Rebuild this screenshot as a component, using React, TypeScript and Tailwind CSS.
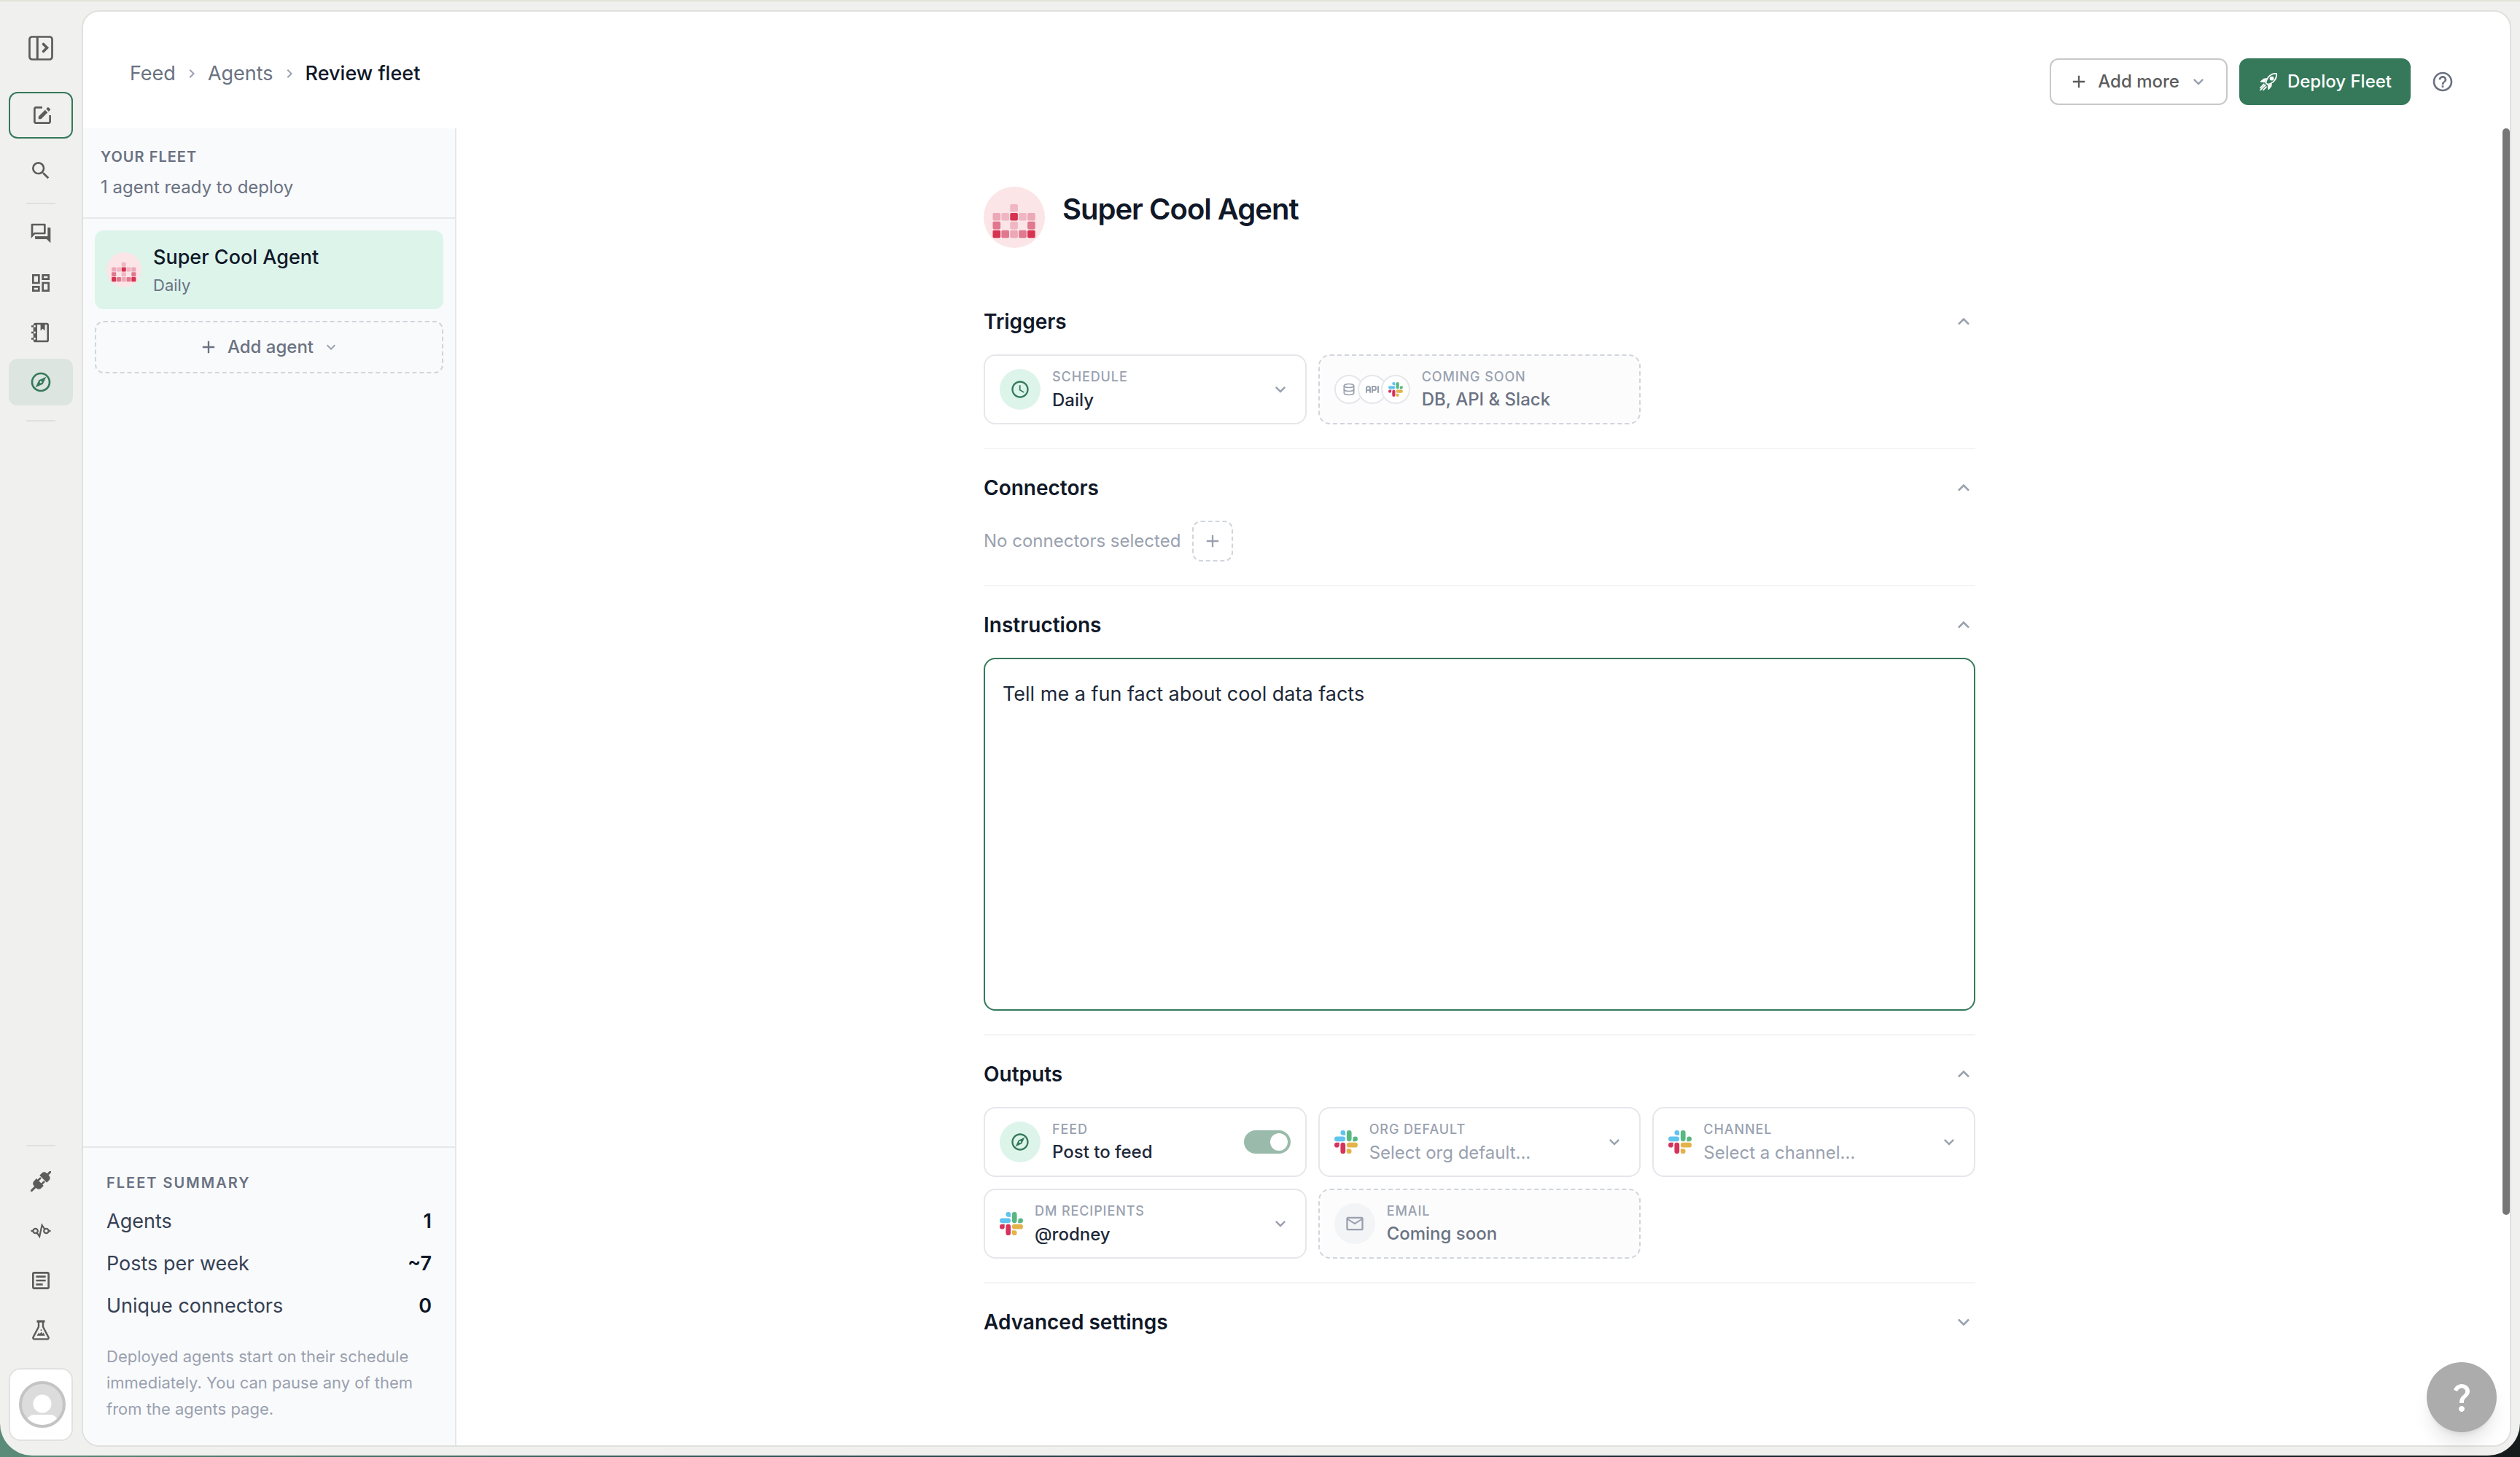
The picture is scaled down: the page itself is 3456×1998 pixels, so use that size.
import type { ReactNode } from 'react';
import {
  MdAdd,
  MdChevronRight,
  MdExpandLess,
  MdExpandMore,
  MdHelpOutline,
  MdMailOutline,
  MdOutlineArticle,
  MdOutlineDashboard,
  MdOutlineExplore,
  MdOutlineQuestionAnswer,
  MdQuestionMark,
  MdSchedule,
  MdSearch,
} from 'react-icons/md';
import { TbApi, TbDatabase } from 'react-icons/tb';

const ExpandIcon = () => (
  <svg viewBox="0 0 34 34" className="size-[34px]" fill="none" stroke="currentColor">
    <rect x="1.5" y="1.5" width="31" height="31" rx="3.5" strokeWidth="2.7" />
    <path d="M12.3 1.5v31" strokeWidth="3" />
    <path d="M20.5 11.5l5 5-5 5" strokeWidth="3.6" strokeLinecap="round" />
  </svg>
);

const ComposeIcon = () => (
  <svg viewBox="0 0 24 24" className="ml-1 size-6" fill="none" stroke="currentColor">
    <path
      d="M12 1.4H3.2a1.8 1.8 0 0 0-1.8 1.8v17.6a1.8 1.8 0 0 0 1.8 1.8h17.6a1.8 1.8 0 0 0 1.8-1.8V12"
      strokeWidth="2.7"
    />
    <path d="M6.8 17.3v-3.6l9-9 3.6 3.6-9 9z" fill="currentColor" stroke="none" />
    <path d="M17.2 3.3l1.9-1.9a1.2 1.2 0 0 1 1.7 0l1.9 1.9a1.2 1.2 0 0 1 0 1.7l-1.9 1.9z" fill="currentColor" stroke="none" />
  </svg>
);

const NotebookIcon = () => (
  <svg viewBox="0 0 32 32" className="size-8" fill="none" stroke="currentColor">
    <rect x="7" y="4" width="18.7" height="24" rx="1.6" strokeWidth="2.6" />
    <path d="M6 4h5v24H6z" fill="currentColor" stroke="none" />
    <path d="M15.6 4h6v9.5l-3-2.8-3 2.8z" fill="currentColor" stroke="none" />
    <path d="M3 7.5h5M3 16h5M3 24.5h5" strokeWidth="2.6" />
    <g fill="#f0f0ee" stroke="none">
      <circle cx="7.6" cy="7.5" r="1.4" />
      <circle cx="7.6" cy="16" r="1.4" />
      <circle cx="7.6" cy="24.5" r="1.4" />
    </g>
  </svg>
);

const PlugsIcon = () => (
  <svg viewBox="0 0 28 28" className="size-7" fill="currentColor" stroke="currentColor">
    <g transform="rotate(-45 14 14)">
      <path d="M-4.5 14H4M25 14h7.5" strokeWidth="3" strokeLinecap="round" />
      <path d="M12 10.5h4.5M12 17.5h4.5" strokeWidth="2.6" strokeLinecap="round" />
      <path d="M12.5 7v14h-5A4.5 4.5 0 0 1 3 16.5v-5A4.5 4.5 0 0 1 7.5 7z" stroke="none" />
      <path d="M18.5 7v14H23a4.5 4.5 0 0 0 4.5-4.5v-5A4.5 4.5 0 0 0 23 7z" stroke="none" />
    </g>
  </svg>
);

const EndpointsIcon = () => (
  <svg viewBox="0 0 28 28" className="size-7" fill="none" stroke="currentColor" strokeWidth="2.2">
    <circle cx="6.6" cy="14" r="3.2" />
    <circle cx="21.4" cy="14" r="3.2" />
    <path d="M.5 14h3M24.5 14h3" strokeWidth="2.6" />
    <path d="M8.6 16.5l3.6 5L15.600 6l3.6 5.500" />
  </svg>
);

const FlaskIcon = () => (
  <svg viewBox="0 0 24 28" className="h-7 w-6" fill="none" stroke="currentColor" strokeWidth="2.4">
    <path d="M6.5 2h11" strokeWidth="3.2" />
    <path d="M9 2v7.5L1.6 23.6a1.8 1.8 0 0 0 1.6 2.8h17.6a1.8 1.8 0 0 0 1.6-2.8L15 9.5V2" strokeLinejoin="round" />
    <path d="M6.5 21.8l2.6-4.3 1.6 1.8 2-3 1.6 2.6 1.4-1.4 2 4.3z" fill="currentColor" stroke="none" />
    <circle cx="12.5" cy="14" r="1" fill="currentColor" stroke="none" />
  </svg>
);

const RocketIcon = () => (
  <svg viewBox="0 0 28 28" className="size-7" fill="none" stroke="currentColor" strokeWidth="1.8" strokeLinejoin="round">
    <path d="M25 3c-5.5-.3-9 1.8-11.5 5.2-1.7 2.4-2.6 4.800-3.2 7.2l2.5 2.5c2.5-.6 4.9-1.6 7.2-3.3C23.3 12 25.4 8.6 25 3z" />
    <circle cx="18.6" cy="9.6" r="2" fill="currentColor" />
    <path d="M11.8 9.6l-4.3.6L3 14l6.2.6M18.3 16.3l-.5 4.3L14 25l-.6-6.1" fill="currentColor" strokeWidth="1" />
    <path d="M7.8 17.5L3 22.3M9.8 18.6L3 25.4M11 21.2l-4 4.2" strokeLinecap="round" />
  </svg>
);

const SlackIcon = ({ className }: { className: string }) => (
  <svg viewBox="0 0 24 24" className={className}>
    <path
      fill="#d6335b"
      d="M5.042 15.165a2.528 2.528 0 0 1-2.52 2.523A2.528 2.528 0 0 1 0 15.165a2.527 2.527 0 0 1 2.522-2.52h2.52v2.52zM6.313 15.165a2.527 2.527 0 0 1 2.521-2.52 2.527 2.527 0 0 1 2.521 2.52v6.313A2.528 2.528 0 0 1 8.834 24a2.528 2.528 0 0 1-2.521-2.522v-6.313z"
    />
    <path
      fill="#61c3ee"
      d="M8.834 5.042a2.528 2.528 0 0 1-2.521-2.52A2.528 2.528 0 0 1 8.834 0a2.528 2.528 0 0 1 2.521 2.522v2.52H8.834zM8.834 6.313a2.528 2.528 0 0 1 2.521 2.521 2.528 2.528 0 0 1-2.521 2.521H2.522A2.528 2.528 0 0 1 0 8.834a2.528 2.528 0 0 1 2.522-2.521h6.312z"
    />
    <path
      fill="#59b781"
      d="M18.956 8.834a2.528 2.528 0 0 1 2.522-2.521A2.528 2.528 0 0 1 24 8.834a2.528 2.528 0 0 1-2.522 2.521h-2.522V8.834zM17.688 8.834a2.528 2.528 0 0 1-2.523 2.521 2.527 2.527 0 0 1-2.52-2.521V2.522A2.527 2.527 0 0 1 15.165 0a2.528 2.528 0 0 1 2.523 2.522v6.312z"
    />
    <path
      fill="#e3b34a"
      d="M15.165 18.956a2.528 2.528 0 0 1 2.523 2.522A2.528 2.528 0 0 1 15.165 24a2.527 2.527 0 0 1-2.52-2.522v-2.522h2.52zM15.165 17.688a2.527 2.527 0 0 1-2.52-2.523 2.526 2.526 0 0 1 2.52-2.52h6.313A2.527 2.527 0 0 1 24 15.165a2.528 2.528 0 0 1-2.522 2.523h-6.313z"
    />
  </svg>
);

// one character per cell: l(ight), s(oft), m(id), d(ark)
const AVATAR_ROWS = ['  l  ', 'sldls', 'm l m', 'dmsmd'];
const AVATAR_COLORS: Record<string, string> = {
  l: '#f0b6c3',
  s: '#eca8b7',
  m: '#e0788f',
  d: '#d5334f',
};

const AgentAvatar = ({ className }: { className: string }) => (
  <svg viewBox="0 0 84 84" className={className}>
    <circle cx="42" cy="42" r="42" fill="#fbe5e7" />
    {AVATAR_ROWS.flatMap((row, y) =>
      row.split('').map((cell, x) =>
        cell === ' ' ? null : (
          <rect
            key={`${x}-${y}`}
            x={12.5 + x * 11.9}
            y={24 + y * 11.9}
            width="10.6"
            height="10.6"
            rx="1.8"
            fill={AVATAR_COLORS[cell]}
          />
        ),
      ),
    )}
  </svg>
);

const RailButton = ({ label, className = '', children }: { label: string; className?: string; children: ReactNode }) => (
  <button type="button" aria-label={label} className={`flex h-16 w-full items-center justify-center rounded-xl ${className}`}>
    {children}
  </button>
);

const RailDivider = ({ className }: { className: string }) => <hr className={`w-10 border-t-2 border-[#e0e0de] ${className}`} />;

const Rail = () => (
  <nav className="flex w-28 shrink-0 flex-col items-center px-3 pt-8 pb-2 text-[#5c5c5c]">
    <RailButton label="Expand sidebar">
      <ExpandIcon />
    </RailButton>
    <RailButton label="New chat" className="mt-7 border-2 border-[#35795a]">
      <ComposeIcon />
    </RailButton>
    <RailButton label="Search" className="mt-3">
      <MdSearch className="size-8" />
    </RailButton>
    <RailDivider className="mt-3 mb-2" />
    <div className="flex w-full flex-col gap-1">
      <RailButton label="Chats">
        <MdOutlineQuestionAnswer className="size-8" />
      </RailButton>
      <RailButton label="Dashboards">
        <MdOutlineDashboard className="size-8" />
      </RailButton>
      <RailButton label="Notebooks">
        <NotebookIcon />
      </RailButton>
      <RailButton label="Feed" className="bg-[#dce5df] text-[#35795a]">
        <MdOutlineExplore className="size-8" />
      </RailButton>
    </div>
    <RailDivider className="mt-5" />

    <RailDivider className="mt-auto mb-4" />
    <div className="flex w-full flex-col gap-1">
      <RailButton label="Connectors">
        <PlugsIcon />
      </RailButton>
      <RailButton label="API">
        <EndpointsIcon />
      </RailButton>
      <RailButton label="Docs">
        <MdOutlineArticle className="size-8" />
      </RailButton>
      <RailButton label="Labs">
        <FlaskIcon />
      </RailButton>
    </div>
    <button
      type="button"
      aria-label="Account"
      className="mt-5 flex h-25 w-full items-center justify-center rounded-2xl border-2 border-[#e2e2e0] bg-white"
    >
      <svg viewBox="0 0 64 64" className="ml-1 size-16">
        <clipPath id="user">
          <circle cx="32" cy="32" r="28" />
        </clipPath>
        <circle cx="32" cy="32" r="30" fill="#dcdcdc" stroke="#c4c4c4" strokeWidth="4" />
        <g fill="#fff" clipPath="url(#user)">
          <circle cx="32" cy="31" r="12.5" />
          <path d="M10 56c2-7 6-10 11-10h22c5 0 9 3 11 10v6H10z" />
        </g>
      </svg>
    </button>
  </nav>
);

const SUMMARY = [
  ['Agents', '1'],
  ['Posts per week', '~7'],
  ['Unique connectors', '0'],
];

const Sidebar = () => (
  <aside className="flex w-[512px] shrink-0 flex-col border-r-2 border-gray-200 bg-[#f9fafc]">
    <div className="border-b-2 border-gray-200 px-6 pt-6 pb-[22px] text-gray-500">
      <h2 className="text-[20px] leading-[30px] font-semibold tracking-wider">YOUR FLEET</h2>
      <p className="mt-2 text-[24px] leading-[38px]">1 agent ready to deploy</p>
    </div>
    <div className="flex flex-col gap-4 p-4">
      <button type="button" className="flex items-center gap-4 rounded-xl bg-[#ddf4eb] p-4 text-left">
        <AgentAvatar className="size-12" />
        <span className="flex flex-col">
          <span className="text-[27px] leading-[42px] font-medium text-gray-900">Super Cool Agent</span>
          <span className="text-[22px] leading-[34px] text-gray-500">Daily</span>
        </span>
      </button>
      <button
        type="button"
        className="flex h-18 items-center justify-center gap-3 rounded-xl border-2 border-dashed border-gray-300 text-[24px] font-medium text-gray-500"
      >
        <MdAdd className="size-7" />
        Add agent
        <MdExpandMore className="size-6 text-gray-400" />
      </button>
    </div>
    <div className="mt-auto border-t-2 border-gray-200 p-8">
      <h2 className="text-[20px] leading-8 font-semibold tracking-widest text-gray-500">FLEET SUMMARY</h2>
      <dl className="mt-2">
        {SUMMARY.map(([label, value]) => (
          <div key={label} className="flex h-[58px] items-center justify-between text-[27px]">
            <dt className="text-gray-700">{label}</dt>
            <dd className="font-semibold text-gray-900">{value}</dd>
          </div>
        ))}
      </dl>
      <p className="mt-[22px] text-[22px] leading-9 text-gray-400">
        Deployed agents start on their schedule immediately. You can pause any of them from the agents page.
      </p>
    </div>
  </aside>
);

const Header = () => (
  <header className="flex h-40 shrink-0 items-start justify-between px-16 pt-16">
    <nav aria-label="Breadcrumb" className="flex h-[42px] items-center gap-2.5 text-[27px] text-gray-500">
      <a href="#feed">Feed</a>
      <MdChevronRight className="size-6 text-gray-400" />
      <a href="#agents">Agents</a>
      <MdChevronRight className="size-6 text-gray-400" />
      <span className="font-medium text-gray-900">Review fleet</span>
    </nav>
    <div className="flex items-center gap-4 text-[24px] font-medium">
      <button
        type="button"
        className="flex h-16 items-center gap-3 rounded-xl border-2 border-[#c8c8c8] px-6 text-[#5c5c5c]"
      >
        <MdAdd className="size-7" />
        Add more
        <MdExpandMore className="size-7 text-gray-400" />
      </button>
      <button
        type="button"
        className="flex h-16 items-center gap-3 rounded-xl border-2 border-[#35795a] bg-[#35795a] px-6 text-white"
      >
        <RocketIcon />
        Deploy Fleet
      </button>
      <button type="button" aria-label="Help" className="flex size-14 items-center justify-center text-gray-500">
        <MdHelpOutline className="size-8" />
      </button>
    </div>
  </header>
);

const Section = ({ title, open = true, children }: { title: string; open?: boolean; children?: ReactNode }) => (
  <section className="border-b-2 border-gray-100 py-8 last:border-b-0">
    <button type="button" aria-expanded={open} className="flex h-[42px] w-full items-center justify-between">
      <h2 className="text-[28px] font-semibold text-gray-900">{title}</h2>
      {open ? <MdExpandLess className="size-8 text-gray-400" /> : <MdExpandMore className="size-8 text-gray-400" />}
    </button>
    {children && <div className="mt-6">{children}</div>}
  </section>
);

const CardLabel = ({ children }: { children: ReactNode }) => (
  <span className="block text-[18px] leading-7 font-medium tracking-wider text-gray-400">{children}</span>
);

const SelectCard = ({ icon, label, value, placeholder }: { icon: ReactNode; label: string; value: string; placeholder?: boolean }) => (
  <label className="flex h-24 items-center gap-4 rounded-2xl border-2 border-gray-200 px-5">
    {icon}
    <span className="min-w-0 flex-1">
      <CardLabel>{label}</CardLabel>
      <select
        className={`block h-[34px] w-full appearance-none text-[24px] ${placeholder ? 'text-gray-400' : 'font-medium text-gray-800'}`}
      >
        <option>{value}</option>
      </select>
    </span>
    <MdExpandMore className="size-7 shrink-0 text-gray-400" />
  </label>
);

const SoonCard = ({ icon, label, value }: { icon: ReactNode; label: string; value: string }) => (
  <div className="flex h-24 items-center gap-4 rounded-2xl border-2 border-dashed border-gray-300 bg-[#fcfcfd] px-5">
    {icon}
    <div>
      <CardLabel>{label}</CardLabel>
      <p className="text-[24px] leading-[34px] font-medium text-gray-500">{value}</p>
    </div>
  </div>
);

const RoundIcon = ({ className, children }: { className: string; children: ReactNode }) => (
  <span className={`flex size-14 shrink-0 items-center justify-center rounded-full ${className}`}>{children}</span>
);

const StackIcon = ({ children }: { children: ReactNode }) => (
  <span className="flex size-10 items-center justify-center rounded-full border-2 border-gray-200 bg-white text-gray-400">
    {children}
  </span>
);

const AgentForm = () => (
  <main className="min-w-0 flex-1 overflow-hidden px-16 pt-20">
    <div className="mx-auto max-w-[1360px]">
      <div className="mb-12 flex gap-6">
        <AgentAvatar className="size-21" />
        <h1 className="text-[40px] leading-[62px] font-semibold tracking-tight text-gray-900">Super Cool Agent</h1>
      </div>

      <Section title="Triggers">
        <div className="grid grid-cols-3 gap-4">
          <SelectCard
            label="SCHEDULE"
            value="Daily"
            icon={
              <RoundIcon className="bg-[#ddf4eb] text-[#35795a]">
                <MdSchedule className="size-7" />
              </RoundIcon>
            }
          />
          <SoonCard
            label="COMING SOON"
            value="DB, API &amp; Slack"
            icon={
              <div className="flex -space-x-2">
                <StackIcon>
                  <TbDatabase className="size-5" />
                </StackIcon>
                <StackIcon>
                  <TbApi className="size-6" />
                </StackIcon>
                <StackIcon>
                  <SlackIcon className="size-5" />
                </StackIcon>
              </div>
            }
          />
        </div>
      </Section>

      <Section title="Connectors">
        <div className="flex items-center gap-4 text-[24px] text-gray-400">
          <p>No connectors selected</p>
          <button
            type="button"
            aria-label="Add connector"
            className="flex size-14 items-center justify-center rounded-xl border-2 border-dashed border-gray-300"
          >
            <MdAdd className="size-7" />
          </button>
        </div>
      </Section>

      <Section title="Instructions">
        <textarea
          aria-label="Instructions"
          className="block h-[484px] w-full resize-none rounded-2xl border-2 border-[#35795a] px-6 py-7 text-[27px] leading-10 text-gray-800 outline-none"
          defaultValue="Tell me a fun fact about cool data facts"
        />
      </Section>

      <Section title="Outputs">
        <div className="grid grid-cols-3 gap-4">
          <label className="flex h-24 items-center gap-4 rounded-2xl border-2 border-gray-200 px-5">
            <RoundIcon className="bg-[#ddf4eb] text-[#35795a]">
              <MdOutlineExplore className="size-7" />
            </RoundIcon>
            <span className="flex-1">
              <CardLabel>FEED</CardLabel>
              <span className="block text-[24px] leading-[34px] font-medium text-gray-800">Post to feed</span>
            </span>
            <input
              type="checkbox"
              role="switch"
              defaultChecked
              className="flex h-8 w-16 appearance-none items-center rounded-full bg-gray-300 px-1 before:size-6 before:rounded-full before:bg-white checked:justify-end checked:bg-[#9abbab]"
            />
          </label>
          <SelectCard label="ORG DEFAULT" value="Select org default..." placeholder icon={<SlackIcon className="size-8 shrink-0" />} />
          <SelectCard label="CHANNEL" value="Select a channel..." placeholder icon={<SlackIcon className="size-8 shrink-0" />} />
          <SelectCard label="DM RECIPIENTS" value="@rodney" icon={<SlackIcon className="size-8 shrink-0" />} />
          <SoonCard
            label="EMAIL"
            value="Coming soon"
            icon={
              <RoundIcon className="bg-gray-100 text-gray-400">
                <MdMailOutline className="size-7" />
              </RoundIcon>
            }
          />
        </div>
      </Section>

      <Section title="Advanced settings" open={false} />
    </div>
  </main>
);

export const App = () => {
  return (
    <div className="flex h-screen flex-col bg-linear-to-r from-[#5b8b79] via-[#1c3342] to-[#161b1c] pb-0.5 font-['Inter',sans-serif]">
      <div className="flex min-h-0 flex-1 rounded-b-[44px] border-t-2 border-[#e3e4d6] bg-[#f0f0ee] pr-3 pb-3">
        <Rail />
        <div className="mt-3 flex min-w-0 flex-1 flex-col overflow-hidden rounded-3xl border-2 border-[#e0e0de] bg-white">
          <Header />
          <div className="flex min-h-0 flex-1">
            <Sidebar />
            <AgentForm />
            <div aria-hidden="true" className="flex w-2.5 shrink-0 flex-col">
              <div className="flex-[33] rounded-full bg-[#767676]" />
              <div className="flex-[7]" />
            </div>
          </div>
        </div>
      </div>
      <button
        type="button"
        aria-label="Support"
        className="fixed right-8 bottom-[34px] flex size-24 items-center justify-center rounded-full bg-[#acacac] text-white shadow-xl"
      >
        <MdQuestionMark className="size-12" />
      </button>
    </div>
  );
};

export default App;
